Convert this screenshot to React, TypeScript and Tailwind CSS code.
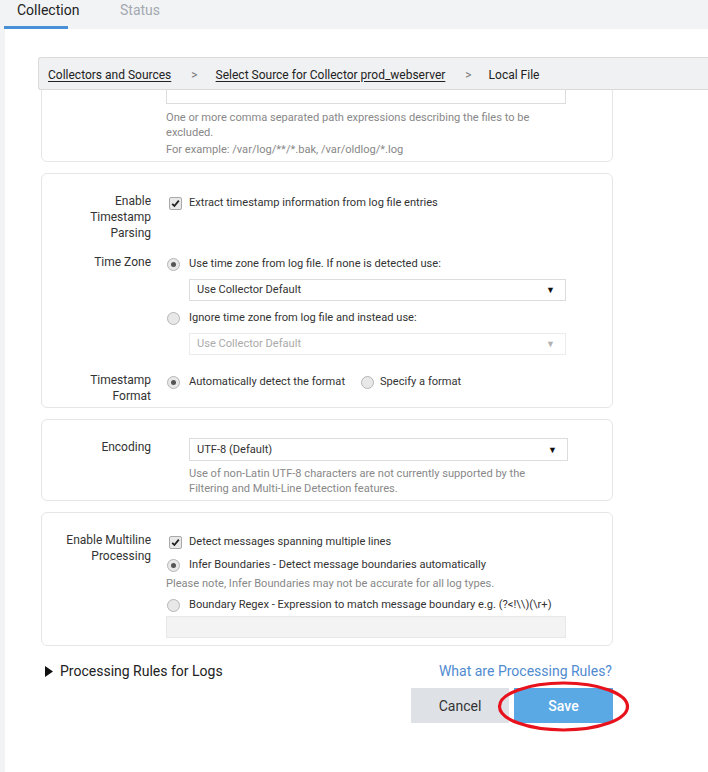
import React from "react";

function Checkbox() {
  return (
    <span className="flex h-[13px] w-[13px] shrink-0 items-center justify-center rounded-[2px] border border-[#a9a9a9] bg-[#e9e9e9]">
      <svg width="9" height="9" viewBox="0 0 9 9">
        <path d="M1.2 4.8 L3.4 7 L7.8 1.6" fill="none" stroke="#222" strokeWidth="1.8" />
      </svg>
    </span>
  );
}

function Radio({ checked }: { checked?: boolean }) {
  return (
    <span className="flex h-[13px] w-[13px] shrink-0 items-center justify-center rounded-full border border-[#b5b5b5] bg-[#e8e8e8]">
      {checked ? <span className="h-[5px] w-[5px] rounded-full bg-[#555]" /> : null}
    </span>
  );
}

function Select({ text, disabled, w }: { text: string; disabled?: boolean; w: string }) {
  return (
    <div
      className={
        "flex h-[22px] items-center justify-between border pl-[7px] pr-[10px] text-[11.1px] " +
        w +
        (disabled ? " border-[#ececec] text-[#aaa]" : " border-[#dcdcdc] text-[#333]")
      }
    >
      <span>{text}</span>
      <span className={"text-[9px] " + (disabled ? "text-[#b0b0b0]" : "text-[#111]")}>▼</span>
    </div>
  );
}

function Label({ children, className = "" }: { children: React.ReactNode; className?: string }) {
  return <div className={"w-[109px] shrink-0 text-right text-[12px] text-[#333] " + className}>{children}</div>;
}

export default function App() {
  return (
    <div className="min-h-[772px] w-[708px] bg-[#f2f3f5] font-['Roboto',sans-serif] text-[11.1px] leading-[16px] text-[#333]">
      {/* Tabs */}
      <div className="flex h-[29px] pl-[4px]">
        <div className="flex h-[29px] w-[64px] flex-col justify-between">
          <span className="mt-[1px] pl-[13px] text-[14px] leading-[18px] text-[#222] whitespace-nowrap">Collection</span>
          <span className="h-[3px] w-full bg-[#4a90d6]" />
        </div>
        <div className="ml-[52px] pt-[1px] text-[14px] leading-[18px] text-[#a3a9b0]">Status</div>
      </div>

      {/* White panel */}
      <div className="ml-[5px] min-h-[743px] bg-white pt-[28px]">
        {/* Breadcrumb */}
        <div className="ml-[33px] flex h-[33px] items-center rounded-l-[3px] border border-r-0 border-[#dadada] bg-[#f0f1f3] pl-[9px] pt-[2px] text-[12px] text-[#222]">
          <span className="underline underline-offset-2">Collectors and Sources</span>
          <span className="ml-[20px] text-[#777]">&gt;</span>
          <span className="ml-[18px] underline underline-offset-2">Select Source for Collector prod_webserver</span>
          <span className="ml-[20px] text-[#777]">&gt;</span>
          <span className="ml-[17px]">Local File</span>
        </div>

        <div className="ml-[36px] w-[572px]">
          {/* Card 1 (scrolled, top hidden) */}
          <div className="overflow-hidden">
            <div className="-mt-[9px] rounded-b-[6px] border border-[#e6e6e6] pb-[4px]">
              <div className="flex">
                <Label className="-mt-[4px]">Blacklist</Label>
                <div className="ml-[15px] w-[400px]">
                  <div className="h-[22px] border border-[#dcdcdc]" />
                  <div className="mt-[6px] leading-[15px] text-[#888]">
                    One or more comma separated path expressions describing the files to be excluded.
                  </div>
                  <div className="mt-[2px] leading-[15px] text-[#888]">For example: /var/log/**/*.bak, /var/oldlog/*.log</div>
                </div>
              </div>
            </div>
          </div>

          {/* Card 2 */}
          <div className="mt-[11px] rounded-[6px] border border-[#e6e6e6] pb-[3px] pt-[19px]">
            <div className="flex">
              <Label>
                Enable
                <br />
                Timestamp
                <br />
                Parsing
              </Label>
              <div className="ml-[18px] mt-[2px] flex h-[16px] items-center gap-[7px]">
                <Checkbox />
                <span>Extract timestamp information from log file entries</span>
              </div>
            </div>
            <div className="mt-[13px] flex">
              <Label>Time Zone</Label>
              <div className="ml-[16px] mt-[2px] flex flex-col">
                <div className="flex h-[16px] items-center gap-[9px]">
                  <Radio checked />
                  <span>Use time zone from log file. If none is detected use:</span>
                </div>
                <div className="ml-[22px] mt-[7px]">
                  <Select text="Use Collector Default" w="w-[377px]" />
                </div>
                <div className="mt-[9px] flex h-[16px] items-center gap-[9px]">
                  <Radio />
                  <span>Ignore time zone from log file and instead use:</span>
                </div>
                <div className="ml-[22px] mt-[7px]">
                  <Select text="Use Collector Default" w="w-[377px]" disabled />
                </div>
              </div>
            </div>
            <div className="mt-[17px] flex">
              <Label>
                Timestamp
                <br />
                Format
              </Label>
              <div className="ml-[16px] mt-[2px] flex h-[16px] items-center">
                <Radio checked />
                <span className="ml-[9px]">Automatically detect the format</span>
                <span className="ml-[16px]" />
                <Radio />
                <span className="ml-[6px]">Specify a format</span>
              </div>
            </div>
          </div>

          {/* Card 3 */}
          <div className="mt-[11px] rounded-[6px] border border-[#e6e6e6] pb-[4px] pt-[18px]">
            <div className="flex">
              <Label className="mt-[1px]">Encoding</Label>
              <div className="ml-[38px] flex flex-col">
                <Select text="UTF-8 (Default)" w="w-[379px] h-[23px]" />
                <div className="mt-[5px] leading-[15px] text-[#888]">
                  Use of non-Latin UTF-8 characters are not currently supported by the
                  <br />
                  Filtering and Multi-Line Detection features.
                </div>
              </div>
            </div>
          </div>

          {/* Card 4 */}
          <div className="mt-[11px] rounded-[6px] border border-[#e6e6e6] pb-[7px] pt-[19px]">
            <div className="flex">
              <Label>
                Enable Multiline
                <br />
                Processing
              </Label>
              <div className="ml-[15px] mt-[2px] flex w-[400px] flex-col">
                <div className="ml-[3px] flex h-[16px] items-center gap-[7px]">
                  <Checkbox />
                  <span>Detect messages spanning multiple lines</span>
                </div>
                <div className="ml-[1px] mt-[7px] flex h-[16px] items-center gap-[9px]">
                  <Radio checked />
                  <span>Infer Boundaries - Detect message boundaries automatically</span>
                </div>
                <div className="mt-[3px] text-[#888]">Please note, Infer Boundaries may not be accurate for all log types.</div>
                <div className="ml-[1px] mt-[5px] flex h-[16px] items-center gap-[9px] whitespace-nowrap">
                  <Radio />
                  <span>Boundary Regex - Expression to match message boundary e.g. (?&lt;!\\)(\r+)</span>
                </div>
                <div className="mt-[3px] h-[22px] border border-[#e8e8e8] bg-[#f3f3f3]" />
              </div>
            </div>
          </div>

          {/* Processing rules */}
          <div className="mt-[15px] flex items-center justify-between text-[14px] leading-[20px]">
            <div className="flex items-center">
              <svg className="ml-[4px]" width="8" height="11" viewBox="0 0 8 11">
                <polygon points="0,0 8,5.5 0,11" fill="#111" />
              </svg>
              <span className="ml-[7px] text-[#222]">Processing Rules for Logs</span>
            </div>
            <span className="mr-[1px] text-[#4f8bd0]">What are Processing Rules?</span>
          </div>

          {/* Buttons */}
          <div className="mt-[7px] flex justify-end gap-[5px]">
            <div className="flex h-[35px] w-[98px] items-center justify-center bg-[#dee2e7] text-[14px] text-[#333]">Cancel</div>
            <div className="relative flex h-[35px] w-[99px] items-center justify-center bg-[#5aa8e4] text-[14px] font-medium text-white">
              Save
              <svg className="absolute -left-[17px] -top-[7px]" width="133" height="51" viewBox="0 0 133 51">
                <ellipse cx="66.5" cy="25.5" rx="64" ry="23.5" fill="none" stroke="#e8121c" strokeWidth="3.2" />
              </svg>
            </div>
          </div>
        </div>
      </div>
    </div>
  );
}
